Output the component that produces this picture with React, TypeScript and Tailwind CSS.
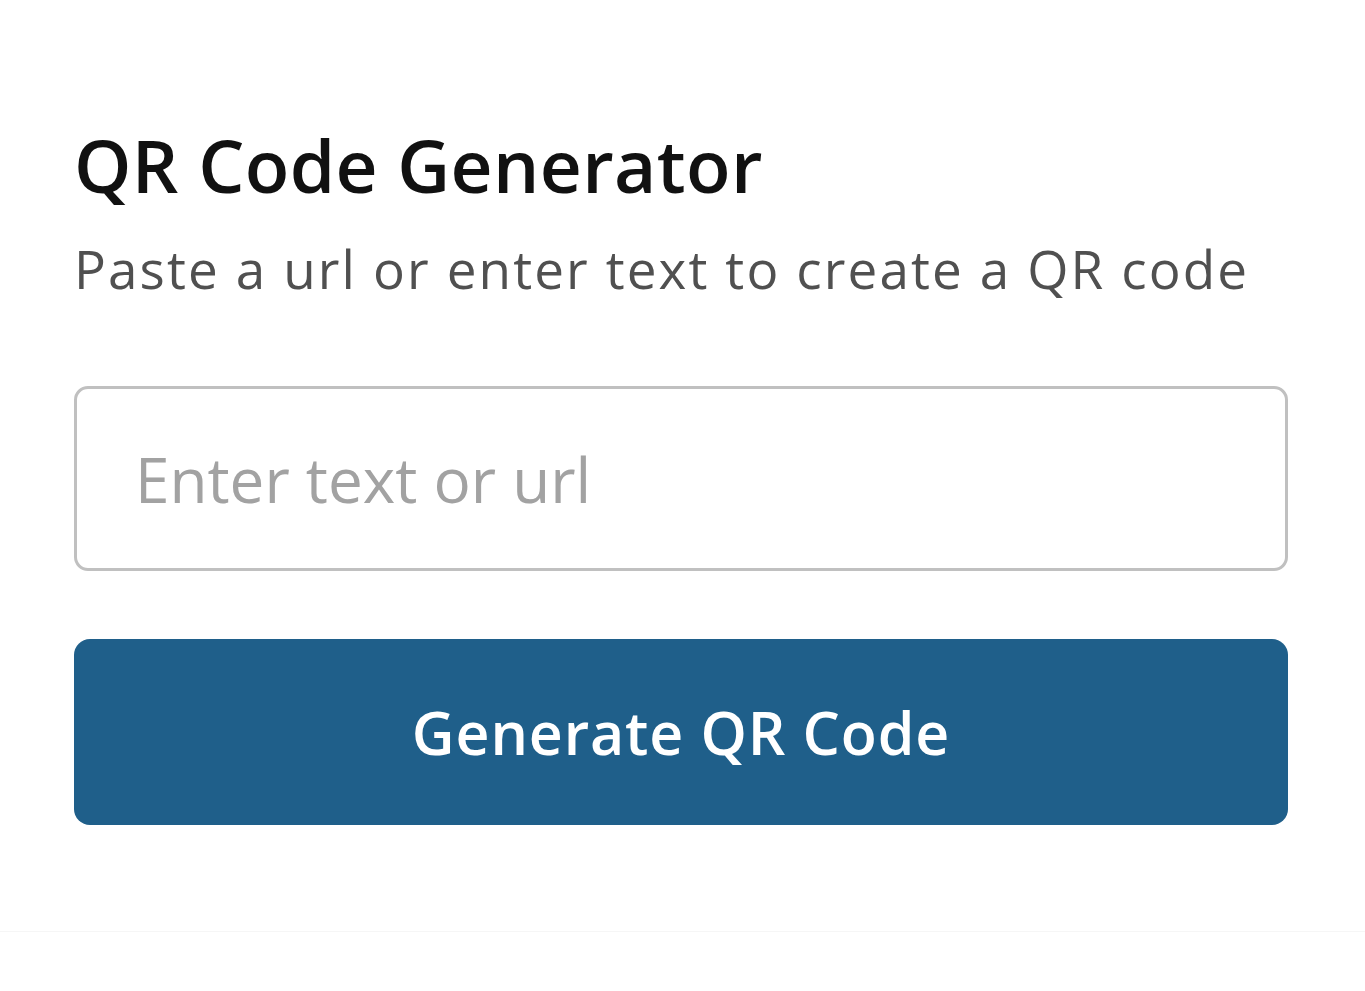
export default function App(): JSX.Element {
  return (
    <div className="min-h-screen bg-white font-['Open_Sans',sans-serif]">
      <div className="flex h-[932px] flex-col border-b border-[#f6f6f6] pl-[74px] pr-[77px] pt-[115px]">
        <h1 className="text-[73px] font-semibold leading-[100px] tracking-[0.005em] text-[#111111]">
          QR Code Generator
        </h1>
        <p className="mt-[19px] text-[53px] leading-[70px] tracking-[0.04em] text-[#505050]">
          Paste a url or enter text to create a QR code
        </p>
        <input
          type="text"
          placeholder="Enter text or url"
          className="mt-[82px] h-[185px] w-full rounded-[14px] border-[3px] border-[#c0c0c0] bg-white px-[58px] text-[62px] text-[#333333] outline-none placeholder:text-[#a2a2a2]"
        />
        <button
          type="button"
          className="mt-[68px] h-[186px] w-full rounded-[16px] bg-[#1f5f8a] text-[59px] font-semibold tracking-[0.015em] text-white"
        >
          Generate QR Code
        </button>
      </div>
    </div>
  );
}
